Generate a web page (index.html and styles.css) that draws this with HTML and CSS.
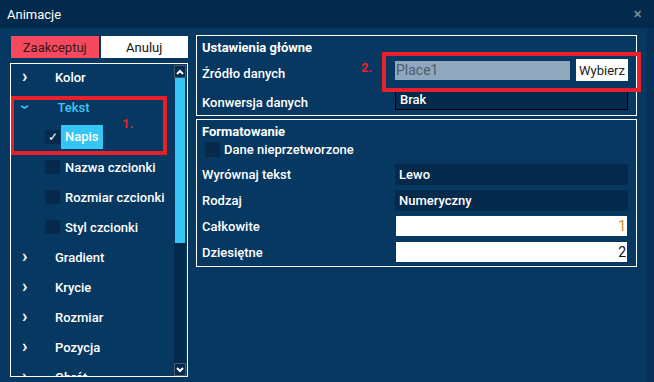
FILE: index.html
```html
<!DOCTYPE html>
<html lang="pl">
<head>
    <meta charset="UTF-8">
    <title>Animacje</title>
    <link rel="stylesheet" href="styles.css">
</head>
<body>
    <div class="window">
        <div class="titlebar">
            <span>Animacje</span>
            <span class="close">&#x2715;</span>
        </div>

        <div class="content">
            <div class="left">
                <div class="buttons">
                    <button class="btn-accept">Zaakceptuj</button>
                    <button class="btn-cancel">Anuluj</button>
                </div>

                <div class="list">
                    <div class="rows">
                        <div class="row"><span class="chev">&#x203A;</span>Kolor</div>
                        <div class="row open"><span class="chev down">&#x203A;</span>Tekst</div>
                        <div class="row sub"><span class="check on">&#x2713;</span><span class="selected">Napis</span></div>
                        <div class="row sub"><span class="check"></span>Nazwa czcionki</div>
                        <div class="row sub"><span class="check"></span>Rozmiar czcionki</div>
                        <div class="row sub"><span class="check"></span>Styl czcionki</div>
                        <div class="row"><span class="chev">&#x203A;</span>Gradient</div>
                        <div class="row"><span class="chev">&#x203A;</span>Krycie</div>
                        <div class="row"><span class="chev">&#x203A;</span>Rozmiar</div>
                        <div class="row"><span class="chev">&#x203A;</span>Pozycja</div>
                        <div class="row"><span class="chev">&#x203A;</span>Obrót</div>
                    </div>
                    <div class="scrollbar">
                        <div class="arrow">
                            <svg width="8" height="6" viewBox="0 0 8 6"><path d="M1 5 L4 2 L7 5" fill="none" stroke="#fff" stroke-width="2"/></svg>
                        </div>
                        <div class="thumb"></div>
                        <div class="track"></div>
                        <div class="arrow">
                            <svg width="8" height="6" viewBox="0 0 8 6"><path d="M1 1 L4 4 L7 1" fill="none" stroke="#fff" stroke-width="2"/></svg>
                        </div>
                    </div>
                    <div class="mark mark-1"></div>
                    <span class="mark-num num-1">1.</span>
                </div>
            </div>

            <div class="right">
                <div class="section main-settings">
                    <div class="section-title">Ustawienia główne</div>
                    <div class="field">
                        <span class="label">Źródło danych</span>
                        <div class="source">
                            <span class="source-input">Place1</span>
                            <button class="btn-pick">Wybierz</button>
                        </div>
                    </div>
                    <div class="field">
                        <span class="label">Konwersja danych</span>
                        <span class="select bordered">Brak</span>
                    </div>
                    <div class="mark mark-2"></div>
                    <span class="mark-num num-2">2.</span>
                </div>

                <div class="section formatting">
                    <div class="section-title">Formatowanie</div>
                    <div class="raw"><span class="check"></span>Dane nieprzetworzone</div>
                    <div class="field">
                        <span class="label">Wyrównaj tekst</span>
                        <span class="select">Lewo</span>
                    </div>
                    <div class="field">
                        <span class="label">Rodzaj</span>
                        <span class="select">Numeryczny</span>
                    </div>
                    <div class="field">
                        <span class="label">Całkowite</span>
                        <span class="number orange">1</span>
                    </div>
                    <div class="field">
                        <span class="label">Dziesiętne</span>
                        <span class="number">2</span>
                    </div>
                </div>
            </div>
            <div class="right-strip"></div>
        </div>
    </div>
</body>
</html>
```

FILE: styles.css
```css
body {
    margin: 0;
    font-family: Roboto, "Liberation Sans", sans-serif;
    font-size: 13px;
    color: #fff;
    background-color: #063862;
}
.window {
    width: 654px;
    height: 382px;
    display: flex;
    flex-direction: column;
    overflow: hidden;
}
.titlebar {
    height: 28px;
    flex-shrink: 0;
    background-color: #032a4c;
    display: flex;
    align-items: center;
    justify-content: space-between;
    padding: 0 12px 0 7px;
    font-size: 13px;
}
.close {
    color: #7c8a98;
    font-size: 11px;
    font-weight: bold;
}
.content {
    flex-grow: 1;
    display: flex;
    padding: 8px 0 0 10px;
    position: relative;
}
.left {
    width: 178px;
    display: flex;
    flex-direction: column;
}
.buttons {
    display: flex;
    gap: 2px;
    padding-left: 1px;
}
.buttons button {
    height: 22px;
    width: 89px;
    border: none;
    font-family: Roboto, "Liberation Sans", sans-serif;
    font-size: 13px;
    padding: 0;
}
.btn-accept {
    background-color: #f54a5d;
    color: #3a1418;
}
.btn-cancel {
    background-color: #fff;
    color: #111;
}
.list {
    margin-top: 5px;
    height: 312px;
    border: 1px solid #fff;
    display: flex;
    position: relative;
    overflow: hidden;
}
.rows {
    width: 163px;
    margin-top: -2px;
}
.row {
    height: 30px;
    display: flex;
    align-items: center;
    font-weight: 500;
    padding-left: 11px;
}
.chev {
    width: 33px;
    font-size: 18px;
    font-weight: bold;
    line-height: 1;
    margin-top: -3px;
}
.chev.down {
    display: inline-block;
    transform: rotate(90deg);
    width: auto;
    margin: 0 29px 0 1px;
}
.open {
    color: #3cc8f5;
}
.sub {
    padding-left: 34px;
}
.check {
    width: 15px;
    height: 14px;
    background-color: #052a4c;
    margin-right: 5px;
    display: flex;
    align-items: center;
    justify-content: center;
    font-size: 12px;
}
.check.on {
    margin-right: 1px;
}
.selected {
    background-color: #36c6f4;
    padding: 4px 4px 5px;
}
.scrollbar {
    width: 12px;
    padding-top: 1px;
    display: flex;
    flex-direction: column;
}
.arrow {
    width: 10px;
    height: 11px;
    border: 1px solid #4a5a6c;
    background-color: #052a4c;
    display: flex;
    align-items: center;
    justify-content: center;
}
.thumb {
    height: 165px;
    background-color: #36c6f4;
    margin: 0 1px;
}
.track {
    flex-grow: 1;
    background-color: #052a4c;
}
.mark {
    position: absolute;
    border: 4px solid #e9202b;
}
.mark-1 {
    left: -1px;
    top: 32px;
    width: 149px;
    height: 51px;
}
.mark-num {
    position: absolute;
    color: #e9202b;
    font-weight: bold;
    font-size: 13px;
}
.num-1 {
    left: 111px;
    top: 52px;
}
.right {
    width: 441px;
    margin-left: 8px;
    display: flex;
    flex-direction: column;
    gap: 3px;
    margin-top: -1px;
}
.section {
    border: 1px solid #fff;
    padding: 4px 8px 0 5px;
    position: relative;
}
.main-settings {
    height: 75px;
}
.formatting {
    height: 142px;
    padding-top: 4px;
}
.section-title {
    font-weight: bold;
    height: 17px;
}
.field {
    display: flex;
    align-items: center;
    height: 26px;
}
.main-settings .field {
    height: 27px;
}
.main-settings .label {
    padding-top: 5px;
}
.main-settings .field + .field {
    margin-top: 2px;
}
.label {
    width: 193px;
    font-weight: 500;
}
.source {
    display: flex;
    align-items: center;
    gap: 6px;
    margin-top: -1px;
}
.source-input {
    width: 174px;
    height: 19px;
    background-color: #8fa8bf;
    color: #4e5c6c;
    padding-left: 1px;
    display: flex;
    align-items: center;
    font-size: 14px;
}
.btn-pick {
    width: 52px;
    height: 22px;
    background-color: #fff;
    color: #222;
    border: none;
    padding: 0;
    font-family: Roboto, "Liberation Sans", sans-serif;
    font-size: 13px;
}
.select {
    width: 229px;
    height: 21px;
    background-color: #052a4c;
    padding-left: 4px;
    display: flex;
    align-items: center;
    font-weight: 500;
}
.select.bordered {
    width: 227px;
    height: 19px;
    border: 1px solid #000;
}
.number {
    width: 230px;
    height: 20px;
    margin-left: 1px;
    background-color: #fff;
    color: #111;
    display: flex;
    align-items: center;
    justify-content: flex-end;
    padding-right: 1px;
    font-size: 14px;
}
.orange {
    color: #c8901c;
}
.raw {
    display: flex;
    align-items: center;
    height: 17px;
    padding-left: 3px;
    font-weight: 500;
    margin-bottom: 3px;
}
.raw .check {
    height: 15px;
    margin-right: 4px;
}
.mark-2 {
    left: 185px;
    top: 16px;
    width: 251px;
    height: 32px;
}
.num-2 {
    left: 164px;
    top: 24px;
}
.right-strip {
    width: 7px;
    margin-left: auto;
    margin-top: -8px;
    background-color: #04305a;
}
```
